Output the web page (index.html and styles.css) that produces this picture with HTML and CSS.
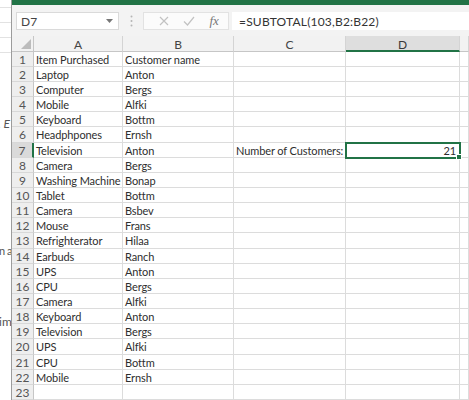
FILE: index.html
```html
<!DOCTYPE html>
<html>
<head>
<meta charset="utf-8">
<link rel="stylesheet" href="styles.css">
</head>
<body>
<div class="screen">
  <div class="behind">
    <div class="bline l1"></div>
    <div class="bline"></div>
    <div class="bline"></div>
    <div class="bline"></div>
    <div class="frag f1">. E</div>
    <div class="frag f2">n a</div>
    <div class="frag f3">im</div>
  </div>
  <div class="excel">
    <div class="titlebar"></div>
    <div class="fbar">
      <div class="namebox"><span>D7</span>
        <svg class="caret" width="7" height="4" viewBox="0 0 7 4"><path d="M0 0h7L3.5 4z" fill="#777"/></svg>
      </div>
      <div class="dots">
        <svg width="3" height="12" viewBox="0 0 3 12"><circle cx="1.5" cy="1.5" r="1" fill="#b5b5b5"/><circle cx="1.5" cy="6" r="1" fill="#b5b5b5"/><circle cx="1.5" cy="10.5" r="1" fill="#b5b5b5"/></svg>
      </div>
      <div class="fbtns">
        <svg width="10" height="10" viewBox="0 0 10 10"><path d="M1 1L9 9M9 1L1 9" stroke="#c2c2c2" stroke-width="1.2" fill="none"/></svg>
        <svg width="12" height="10" viewBox="0 0 12 10"><path d="M1 5.5L4.5 9L11 1" stroke="#c2c2c2" stroke-width="1.2" fill="none"/></svg>
        <span class="fx">fx</span>
      </div>
      <div class="finput">=SUBTOTAL(103,B2:B22)</div>
    </div>
    <div class="grid">
      <div class="hd corner"><svg width="10" height="10" viewBox="0 0 10 10"><path d="M10 0V10H0z" fill="#bcbcbc"/></svg></div>
      <div class="hd">A</div>
      <div class="hd">B</div>
      <div class="hd">C</div>
      <div class="hd sel-col">D</div>
      <div class="hd"></div>

      <div class="rh">1</div><div class="c">Item Purchased</div><div class="c">Customer name</div><div class="c"></div><div class="c"></div><div class="c"></div>
      <div class="rh">2</div><div class="c">Laptop</div><div class="c">Anton</div><div class="c"></div><div class="c"></div><div class="c"></div>
      <div class="rh">3</div><div class="c">Computer</div><div class="c">Bergs</div><div class="c"></div><div class="c"></div><div class="c"></div>
      <div class="rh">4</div><div class="c">Mobile</div><div class="c">Alfki</div><div class="c"></div><div class="c"></div><div class="c"></div>
      <div class="rh">5</div><div class="c">Keyboard</div><div class="c">Bottm</div><div class="c"></div><div class="c"></div><div class="c"></div>
      <div class="rh">6</div><div class="c">Headphpones</div><div class="c">Ernsh</div><div class="c"></div><div class="c"></div><div class="c"></div>
      <div class="rh sel-row">7</div><div class="c">Television</div><div class="c">Anton</div><div class="c">Number of Customers:</div><div class="c num active">21</div><div class="c"></div>
      <div class="rh">8</div><div class="c">Camera</div><div class="c">Bergs</div><div class="c"></div><div class="c"></div><div class="c"></div>
      <div class="rh">9</div><div class="c">Washing Machine</div><div class="c">Bonap</div><div class="c"></div><div class="c"></div><div class="c"></div>
      <div class="rh">10</div><div class="c">Tablet</div><div class="c">Bottm</div><div class="c"></div><div class="c"></div><div class="c"></div>
      <div class="rh">11</div><div class="c">Camera</div><div class="c">Bsbev</div><div class="c"></div><div class="c"></div><div class="c"></div>
      <div class="rh">12</div><div class="c">Mouse</div><div class="c">Frans</div><div class="c"></div><div class="c"></div><div class="c"></div>
      <div class="rh">13</div><div class="c">Refrighterator</div><div class="c">Hilaa</div><div class="c"></div><div class="c"></div><div class="c"></div>
      <div class="rh">14</div><div class="c">Earbuds</div><div class="c">Ranch</div><div class="c"></div><div class="c"></div><div class="c"></div>
      <div class="rh">15</div><div class="c">UPS</div><div class="c">Anton</div><div class="c"></div><div class="c"></div><div class="c"></div>
      <div class="rh">16</div><div class="c">CPU</div><div class="c">Bergs</div><div class="c"></div><div class="c"></div><div class="c"></div>
      <div class="rh">17</div><div class="c">Camera</div><div class="c">Alfki</div><div class="c"></div><div class="c"></div><div class="c"></div>
      <div class="rh">18</div><div class="c">Keyboard</div><div class="c">Anton</div><div class="c"></div><div class="c"></div><div class="c"></div>
      <div class="rh">19</div><div class="c">Television</div><div class="c">Bergs</div><div class="c"></div><div class="c"></div><div class="c"></div>
      <div class="rh">20</div><div class="c">UPS</div><div class="c">Alfki</div><div class="c"></div><div class="c"></div><div class="c"></div>
      <div class="rh">21</div><div class="c">CPU</div><div class="c">Bottm</div><div class="c"></div><div class="c"></div><div class="c"></div>
      <div class="rh">22</div><div class="c">Mobile</div><div class="c">Ernsh</div><div class="c"></div><div class="c"></div><div class="c"></div>
      <div class="rh">23</div><div class="c"></div><div class="c"></div><div class="c"></div><div class="c"></div><div class="c"></div>
    </div>
  </div>
</div>
</body>
</html>
```

FILE: styles.css
```css
html, body {
  margin: 0;
  padding: 0;
  background: #ffffff;
}
body {
  width: 469px;
  height: 400px;
  overflow: hidden;
  font-family: Lato, "Liberation Sans", sans-serif;
}
.screen {
  display: flex;
  height: 400px;
}
.behind {
  width: 11px;
  flex: none;
  overflow: hidden;
  background: #fff;
  white-space: nowrap;
}
.bline {
  height: 14px;
  border-bottom: 1px solid #e2e2e2;
}
.bline.l1 {
  height: 7px;
}
.frag {
  font-size: 12px;
  color: #555;
  line-height: 14px;
}
.f1 {
  margin-top: 64px;
  margin-left: -2px;
  font-style: italic;
}
.f2 {
  margin-top: 113px;
  margin-left: -1px;
  font-size: 11px;
  letter-spacing: -0.5px;
}
.f3 {
  margin-top: 57px;
  margin-left: -1px;
}
.excel {
  flex: 1;
  border-left: 1px solid #9c9c9c;
  display: flex;
  flex-direction: column;
  min-width: 0;
}
.titlebar {
  height: 5px;
  background: #217346;
}
.fbar {
  height: 34px;
  background: #f3f3f3;
  display: flex;
  align-items: center;
  padding: 1px 0 0 4px;
  box-sizing: border-box;
}
.namebox {
  width: 103px;
  height: 18px;
  box-sizing: border-box;
  background: #fff;
  border: 1px solid #dadada;
  display: flex;
  align-items: center;
  justify-content: space-between;
  padding: 1px 5px 0 4px;
  font-size: 12px;
  color: #444;
}
.dots {
  width: 24px;
  display: flex;
  justify-content: center;
  align-items: center;
}
.fbtns {
  width: 86px;
  height: 18px;
  box-sizing: border-box;
  background: #fbfbfb;
  border: 1px solid #e2e2e2;
  display: flex;
  align-items: center;
  justify-content: space-around;
  padding: 0 2px 0 8px;
}
.fx {
  font-family: "Liberation Serif", serif;
  font-style: italic;
  font-size: 13px;
  color: #777;
}
.finput {
  flex: 1;
  margin-left: 3px;
  height: 18px;
  background: #fff;
  font-size: 12px;
  line-height: 19px;
  color: #333;
  padding-left: 7px;
  white-space: nowrap;
  letter-spacing: 0.2px;
}
.grid {
  display: grid;
  grid-template-columns: 22px 89px 111px 112px 114px 1fr;
  grid-template-rows: 16px repeat(23, 15.15px);
  font-size: 11px;
  color: #2e2e2e;
  letter-spacing: -0.1px;
}
.hd {
  background: #f2f2f2;
  border-right: 1px solid #d4d4d4;
  border-bottom: 1px solid #c6c6c6;
  box-sizing: border-box;
  text-align: center;
  line-height: 15px;
  padding-top: 1px;
  color: #444;
  font-size: 12px;
}
.corner {
  display: flex;
  align-items: flex-end;
  justify-content: flex-end;
  padding: 0 2px 2px 0;
  border-right-color: #c6c6c6;
}
.sel-col {
  background: #dedede;
  border-bottom: 2px solid #217346;
  color: #3a3a3a;
}
.rh {
  background: #eeeeee;
  border-right: 1px solid #c6c6c6;
  border-bottom: 1px solid #d8d8d8;
  box-sizing: border-box;
  text-align: center;
  line-height: 14px;
  padding-top: 1px;
  color: #555;
  font-size: 12px;
  letter-spacing: 0;
}
.sel-row {
  background: #dadada;
  border-right: 2px solid #217346;
}
.c {
  border-right: 1px solid #dcdcdc;
  border-bottom: 1px solid #dcdcdc;
  box-sizing: border-box;
  padding: 1px 2px 0;
  line-height: 13px;
  white-space: nowrap;
  overflow: hidden;
}
.num {
  text-align: right;
}
.active {
  position: relative;
  overflow: visible;
  outline: 2px solid #217346;
  outline-offset: -1px;
  padding-right: 3px;
}
.active::after {
  content: "";
  position: absolute;
  right: -3px;
  bottom: -3px;
  width: 4px;
  height: 4px;
  background: #217346;
  border: 1px solid #fff;
}
```
